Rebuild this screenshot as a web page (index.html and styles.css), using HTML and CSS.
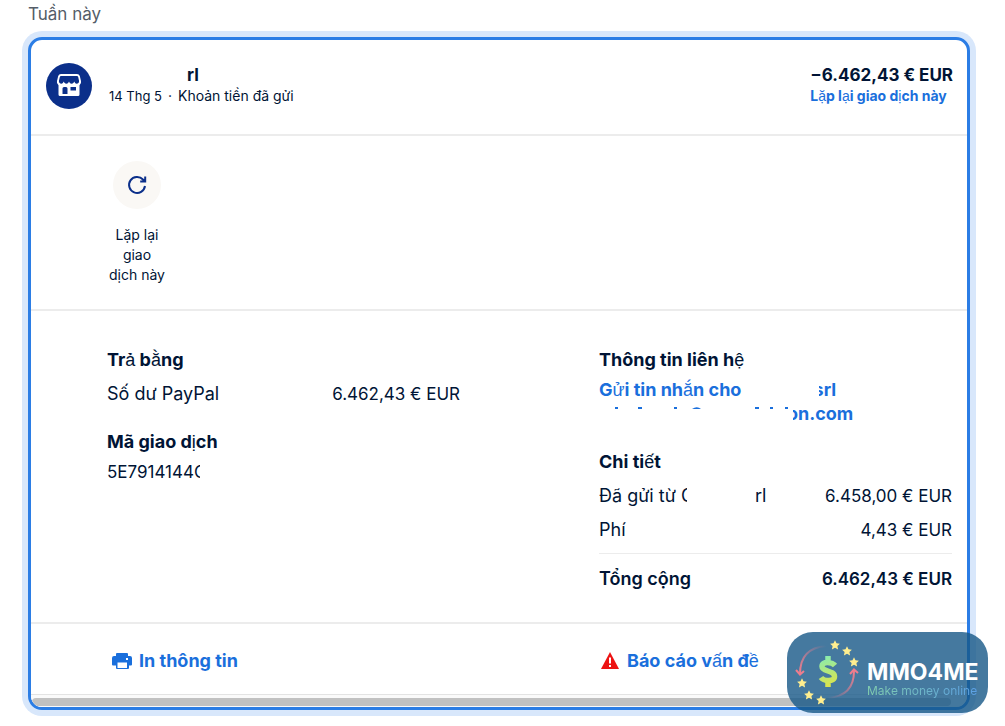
FILE: index.html
```html
<!DOCTYPE html>
<html lang="vi">
<head>
<meta charset="utf-8">
<title>Hoạt động</title>
<link rel="stylesheet" href="styles.css">
</head>
<body>
<main class="page">
  <h2 class="period">Tuần này</h2>
  <article class="card">
    <header class="head">
      <span class="avatar">
        <svg viewBox="0 0 46 46" width="46" height="46" aria-hidden="true">
          <path d="M15 11h16a3 3 0 0 1 2.800 2l1.200 5a4 4 0 0 1-1.500 4.200V31.500a1.500 1.500 0 0 1-1.500 1.500H14a1.500 1.500 0 0 1-1.500-1.500v-9.300A4 4 0 0 1 11 18l1.200-5a3 3 0 0 1 2.800-2z" fill="#fff"/>
          <path d="M15 13h16c.6 0 1 .3 1.200.9l.9 4.100c0 1.700-1 2.700-2.400 2.700s-2-1-2.400-2.200c-.4 1.200-1.300 2.200-2.700 2.200s-2.200-1-2.600-2.200c-.4 1.200-1.200 2.200-2.600 2.200s-2.300-1-2.700-2.200c-.4 1.200-1.100 2.200-2.400 2.200s-2.400-1-2.400-2.700l.9-4.100c.2-.6.6-.9 1.200-.9z" fill="#0b2f8a"/>
          <path d="M16.500 25.500a1.500 1.500 0 0 1 1.500-1.500h2a1.500 1.500 0 0 1 1.500 1.500V31h-5zM24.500 24h5.500v3.500h-5.500z" fill="#0b2f8a"/>
        </svg>
      </span>
      <div class="who">
        <h3 class="name">rl</h3>
        <p class="small"><span class="date">14 Thg 5</span><span>·</span><span>Khoản tiền đã gửi</span></p>
      </div>
      <div class="total">
        <p class="amount">−6.462,43 € EUR</p>
        <a class="small-link" href="#">L<i>ặ</i>p l<i>ạ</i>i giao d<i>ị</i>ch này</a>
      </div>
    </header>
    <section class="actions">
      <button class="repeat" type="button">
        <span class="disc">
          <svg viewBox="0 0 24 24" width="24" height="24" fill="none" stroke="#0b2f8a" stroke-width="2" aria-hidden="true"><path d="M20 13a8 8 0 1 1-2-6.500l2 1.500M20.200 3.500v5h-5"/></svg>
        </span>
        <span>Lặp lại giao dịch này</span>
      </button>
    </section>
    <section class="details">
      <div class="column">
        <h4>Tr<i>ả</i> b<i>ằ</i>ng</h4>
        <div class="row"><span>Số dư PayPal</span><span class="money">6.462,43 € EUR</span></div>
        <h4 class="next">Mã giao d<i>ị</i>ch</h4>
        <p class="code">5E7914144<span class="cut">C</span></p>
      </div>
      <div class="column">
        <h4>Thông tin liên h<i>ệ</i></h4>
        <div class="contact">
          <a href="#">G<i>ử</i>i tin nh<i>ắ</i>n cho <span class="gap"></span><span class="cut-start">s</span>rl</a>
          <a href="#"><svg class="hidden-mail" viewBox="0 0 194 24" width="194" height="24" aria-hidden="true"><path d="M16 6h3M39 6h4M75 6h3M156 6h4M171 6h3M186 6h3" stroke="#1a6fdc" stroke-width="2"/><path d="M93 7q5-3.500 9 0z" fill="#1a6fdc"/></svg><span class="cut-start">o</span>n.com</a>
        </div>
        <h4 class="next">Chi ti<i>ế</i>t</h4>
        <div class="row"><span>Đã gửi từ <span class="cut">C</span><span class="gap short"></span>rl</span><span class="money">6.458,00 € EUR</span></div>
        <div class="row"><span>Phí</span><span class="money">4,43 € EUR</span></div>
        <div class="row sum"><span class="sum-label">Tổng cộng</span><span>6.462,43 € EUR</span></div>
      </div>
    </section>
    <footer class="foot">
      <a class="print" href="#"><svg viewBox="0 0 20 16" width="20" height="16" aria-hidden="true"><path d="M5 0h10a1 1 0 0 1 1 1v2h2a2 2 0 0 1 2 2v6.500a1 1 0 0 1-1 1h-2V15a1 1 0 0 1-1 1H5a1 1 0 0 1-1-1v-2.500H1a1 1 0 0 1-1-1V5a2 2 0 0 1 2-2h2V1a1 1 0 0 1 1-1z" fill="#1a6fdc"/><path d="M5.500 9.500h9.500V15H5.500zM14 5h2v2h-2z" fill="#fff"/></svg><span>In thông tin</span></a>
      <a class="report" href="#"><svg viewBox="0 0 18 18" width="18" height="18" aria-hidden="true"><path d="M9 0l9 17H0z" fill="#ed1313"/><path d="M8 5.500h2v6H8zM8 13h2v2H8z" fill="#fff"/></svg><span>Báo cáo v<i>ấ</i>n đ<i>ề</i></span></a>
    </footer>
    <div class="track"><div class="thumb"></div></div>
  </article>
  <aside class="mark">
    <svg viewBox="0 0 76 76" width="76" height="76" fill="none" aria-hidden="true">
      <defs>
        <linearGradient id="cash" gradientUnits="userSpaceOnUse" x1="32" y1="22" x2="42" y2="53"><stop stop-color="#86edb4"/><stop offset="1" stop-color="#dfe345"/></linearGradient>
        <linearGradient id="fadeLeft" gradientUnits="userSpaceOnUse" x1="10" y1="38" x2="36" y2="12"><stop stop-color="#ee7d8d"/><stop offset="1" stop-color="#ee7d8d" stop-opacity="0"/></linearGradient>
        <linearGradient id="fadeRight" gradientUnits="userSpaceOnUse" x1="64" y1="38" x2="38" y2="64"><stop stop-color="#ee7d8d"/><stop offset="1" stop-color="#ee7d8d" stop-opacity="0"/></linearGradient>
        <path id="star" d="M0-4.800l1.500 3.100 3.400.4-2.500 2.300.7 3.400L0 2.700l-3.100 1.700.7-3.400-2.500-2.300 3.400-.4z" fill="#ffee8f"/>
      </defs>
      <path d="M36 12Q10 14 10 40" stroke="url(#fadeLeft)" stroke-width="2"/>
      <path d="M6 36l4 4.500 4-3.500" stroke="#ee7d8d" stroke-width="2"/>
      <path d="M38 64Q64 62 64 37" stroke="url(#fadeRight)" stroke-width="2"/>
      <path d="M60 40l4-4.500 4 3.500" stroke="#ee7d8d" stroke-width="2"/>
      <path d="M45 31.500C42.500 28.500 32 26.500 32 32.500C32 38 44.500 36 44.500 42.500C44.500 48.500 33.500 47 31 43.500M38 22v6M38 46v7" stroke="url(#cash)" stroke-width="5.500" stroke-linejoin="round"/>
      <use href="#star" x="45" y="11"/><use href="#star" x="57" y="17"/><use href="#star" x="64" y="28"/>
      <use href="#star" x="12" y="49"/><use href="#star" x="19" y="61"/><use href="#star" x="31" y="66"/>
    </svg>
    <div><p class="brand">MMO4ME</p><p class="tag">Make money online</p></div>
  </aside>
</main>
</body>
</html>
```
FILE: styles.css
```css
* { box-sizing: border-box; }
body { margin: 0; background: #fff; color: #001435; font: 18px/24px Inter, sans-serif; }
h2, h3, h4, p { margin: 0; }
h4 { font-size: 18px; font-weight: 700; }
a { color: #1a6fdc; font-weight: 700; text-decoration: none; }
i { font-family: "Liberation Sans", sans-serif; font-style: normal; font-weight: 400; }

.page { position: relative; padding: 2px 35px 16px 28px; }
.period { color: #545d68; font-size: 17px; font-weight: 400; line-height: 24px; }
.card { margin-top: 11px; border: 3px solid #2b7de5; border-radius: 14px; box-shadow: 0 0 0 6px #d8e7fb; background: #fff; overflow: hidden; }

.head { display: flex; padding: 23px 14px 25px 15px; border-bottom: 2px solid #ececec; }
.avatar { display: block; width: 46px; height: 46px; border-radius: 50%; background: #0b2f8a; }
.who { flex: 1; padding-left: 17px; }
.name { padding-left: 78px; font-size: 17px; font-weight: 700; }
.small, .small-link { font-size: 14px; line-height: 18px; }
.small { display: flex; gap: 6px; }
.small-link { display: block; }
.date { font-size: 13px; }
.amount { font-size: 17px; font-weight: 700; }

.actions { padding: 25px 78px 24px; border-bottom: 2px solid #ececec; }
.repeat { display: flex; flex-direction: column; align-items: center; gap: 16px; width: 56px; padding: 0; border: 0; background: none; color: #001435; font: 14px/20px Inter, sans-serif; }
.disc { display: flex; align-items: center; justify-content: center; width: 48px; height: 48px; border-radius: 50%; background: #faf8f5; }

.details { display: flex; justify-content: space-between; padding: 37px 15px 31px 76px; border-bottom: 2px solid #ececec; }
.column { flex: 0 1 353px; }
.next { margin-top: 24px; }
.row { display: flex; justify-content: space-between; margin-top: 10px; }
.money, .code { font-size: 17px; }
.code { margin-top: 6px; }
.contact { margin-top: 6px; }
.contact a { display: block; }
.sum { margin-top: 11px; padding-top: 13px; border-top: 1px solid #ececec; font-size: 17px; font-weight: 600; }
.sum-label { font-size: 18px; }
.cut, .cut-start, .gap { display: inline-block; height: 24px; vertical-align: top; overflow: hidden; }
.cut { width: 6px; }
.cut-start { width: 5px; direction: rtl; }
.gap { width: 73px; }
.short { width: 68px; }
.hidden-mail { vertical-align: top; }

.foot { display: flex; padding: 25px 76px 21px 81px; }
.foot a { display: flex; align-items: center; }
.print { flex: 0 0 489px; gap: 7px; }
.report { gap: 8px; }
.track { padding: 3px 16px 1px 1px; border-top: 1px solid #e3e3e3; background: #fafafa; }
.thumb { height: 8px; border-radius: 4px; background: #c1c1c1; }

.mark { position: absolute; right: 17px; bottom: 13px; display: flex; align-items: center; width: 201px; padding: 2px 3px 3px; border-radius: 26px; background: rgba(23, 88, 135, 0.8); }
.mark div { padding: 14px 0 0 1px; }
.brand { color: #fff; font-size: 23px; font-weight: 700; line-height: 22px; }
.tag { background: linear-gradient(90deg, #83cfae, #5b9fe6); background-clip: text; color: transparent; font-size: 12px; line-height: 15px; }
```
